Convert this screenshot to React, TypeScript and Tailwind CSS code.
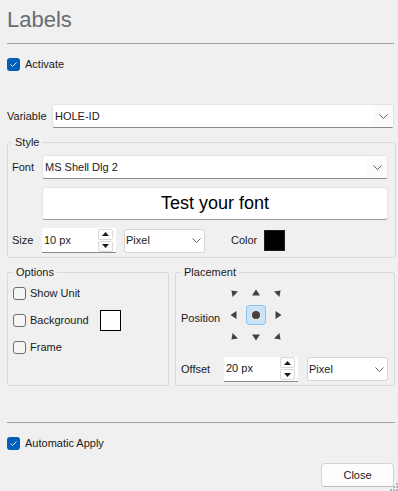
import React from "react";

function Chevron() {
  return (
    <svg width="9" height="5" viewBox="0 0 9 5" className="block">
      <path d="M0.5 0.5 L4.5 4.5 L8.5 0.5" fill="none" stroke="#606060" strokeWidth="1" />
    </svg>
  );
}

function CheckBox({ checked }: { checked: boolean }) {
  if (checked) {
    return (
      <span className="flex h-[13px] w-[13px] shrink-0 items-center justify-center rounded-[3px] bg-[#005fb8]">
        <svg width="13" height="13" viewBox="0 0 13 13" className="block">
          <path d="M3.5 6.5 L5.5 8.5 L9.5 4.5" fill="none" stroke="#e6eef8" strokeWidth="1" />
        </svg>
      </span>
    );
  }
  return <span className="h-[13px] w-[13px] shrink-0 rounded-[3px] border border-[#6e6e6e] bg-[#f5f5f5]" />;
}

function EditCombo({ value }: { value: string }) {
  return (
    <div className="flex h-[24px] min-w-0 flex-1 items-center rounded-[3px] border border-[#e3e3e3] border-b-[#8a8a8a] bg-white pl-[2px]">
      <span className="flex-1 truncate">{value}</span>
      <span className="flex h-full w-[20px] items-center justify-center bg-[#fbfbfb]">
        <Chevron />
      </span>
    </div>
  );
}

function Combo({ value }: { value: string }) {
  return (
    <div className="flex h-[24px] w-[81px] shrink-0 items-center rounded-[3px] border border-[#d5d5d5] bg-white pl-[1px] pr-[3px]">
      <span className="flex-1">{value}</span>
      <Chevron />
    </div>
  );
}

function SpinArrow({ up }: { up: boolean }) {
  return (
    <span className="flex h-[11px] w-[15px] items-center justify-center rounded-[2px] border border-[#d8d8d8] bg-[#fcfcfc]">
      <svg width="7" height="4" viewBox="0 0 7 4" className="block">
        {up ? <path d="M3.5 0 L7 4 L0 4 Z" fill="#1a1a1a" /> : <path d="M0 0 L7 0 L3.5 4 Z" fill="#1a1a1a" />}
      </svg>
    </span>
  );
}

function SpinBox({ value }: { value: string }) {
  return (
    <div className="flex h-[25px] w-[74px] shrink-0 items-center border-b border-[#8a8a8a] bg-white pl-[2px] pr-[3px]">
      <span className="flex-1">{value}</span>
      <span className="flex flex-col gap-px">
        <SpinArrow up />
        <SpinArrow up={false} />
      </span>
    </div>
  );
}

const ARROWS: Record<string, string> = {
  tl: "8.4,8.4 15,9.6 9.6,15",
  t: "11,7.5 15,13.5 7,13.5",
  tr: "13.6,8.4 7,9.6 12.4,15",
  l: "7.5,11 13.5,7 13.5,15",
  r: "14.5,11 8.5,7 8.5,15",
  bl: "8.4,13.6 15,12.4 9.6,7",
  b: "7,8.5 15,8.5 11,14.5",
  br: "13.6,13.6 7,12.4 12.4,7",
};

function ArrowCell({ dir }: { dir: string }) {
  return (
    <div className="flex h-[22px] w-[22px] items-center justify-center">
      <svg width="22" height="22" viewBox="0 0 22 22" className="block">
        <polygon points={ARROWS[dir]} fill="#4a4039" />
      </svg>
    </div>
  );
}

function Fieldset({ title, className, children }: { title: string; className?: string; children: React.ReactNode }) {
  return (
    <fieldset className={"min-w-0 rounded-[2px] border border-[#dadada] " + (className ?? "")}>
      <legend className="px-[3px] leading-[15px]">{title}</legend>
      {children}
    </fieldset>
  );
}

export default function App() {
  return (
    <div className="relative h-[491px] w-[398px] overflow-hidden bg-[#f0f0f0] font-['Liberation_Sans',Arial,sans-serif] text-[11px] text-[#1a1a1a]">
      <div className="h-[43px] pl-[7px] pt-[5px] text-[22px] leading-[30px] text-[#676c73]">Labels</div>
      <div className="ml-[7px] mr-[4px] h-px bg-[#a3a3a3]" />

      <div className="mt-[14px] flex h-[13px] items-center gap-[5px] pl-[7px]">
        <CheckBox checked />
        <span>Activate</span>
      </div>

      <div className="mt-[33px] flex items-center pl-[7px] pr-[4px]">
        <span className="w-[45px] shrink-0">Variable</span>
        <EditCombo value="HOLE-ID" />
      </div>

      <Fieldset title="Style" className="ml-[7px] mr-[2px] mt-[7px] pb-[4px] pl-[4px] pr-[7px]">
        <div className="mt-[5px] flex items-center">
          <span className="w-[30px] shrink-0">Font</span>
          <EditCombo value="MS Shell Dlg 2" />
        </div>
        <div className="ml-[30px] mt-[8px] flex h-[33px] items-center justify-center rounded-[3px] border border-[#e3e3e3] border-b-[#9a9a9a] bg-white text-[18px] text-black">
          Test your font
        </div>
        <div className="mt-[8px] flex h-[25px] items-center">
          <span className="w-[30px] shrink-0">Size</span>
          <SpinBox value="10 px" />
          <div className="ml-[8px]">
            <Combo value="Pixel" />
          </div>
          <span className="ml-[26px] w-[33px] shrink-0">Color</span>
          <span className="h-[21px] w-[21px] shrink-0 border border-[#202020] bg-black" />
        </div>
      </Fieldset>

      <div className="mt-[7px] flex gap-[6px] pl-[7px] pr-[3px]">
        <Fieldset title="Options" className="w-[162px] shrink-0 pl-[5px]">
          <div className="mt-[3px] flex flex-col gap-[6px]">
            <div className="flex h-[21px] items-center">
              <CheckBox checked={false} />
              <span className="ml-[4px]">Show Unit</span>
            </div>
            <div className="flex h-[21px] items-center">
              <CheckBox checked={false} />
              <span className="ml-[4px] w-[70px] shrink-0">Background</span>
              <span className="h-[21px] w-[21px] shrink-0 border border-black bg-white" />
            </div>
            <div className="flex h-[21px] items-center">
              <CheckBox checked={false} />
              <span className="ml-[4px]">Frame</span>
            </div>
          </div>
        </Fieldset>

        <Fieldset title="Placement" className="flex-1 pb-[4px] pl-[5px] pr-[5px]">
          <div className="mt-[2px] flex items-center">
            <span className="w-[42px] shrink-0 pt-[6px]">Position</span>
            <div className="grid grid-cols-[22px_22px_22px] grid-rows-[22px_22px_22px]">
              <ArrowCell dir="tl" />
              <ArrowCell dir="t" />
              <ArrowCell dir="tr" />
              <ArrowCell dir="l" />
              <div className="flex items-center justify-center">
                <div className="flex h-[20px] w-[20px] items-center justify-center rounded-[3px] border border-[#8ec4ee] bg-[#cce4f7]">
                  <span className="h-[8px] w-[8px] rounded-full bg-[#4a4039]" />
                </div>
              </div>
              <ArrowCell dir="r" />
              <ArrowCell dir="bl" />
              <ArrowCell dir="b" />
              <ArrowCell dir="br" />
            </div>
          </div>
          <div className="mt-[9px] flex h-[24px] items-center">
            <span className="w-[43px] shrink-0">Offset</span>
            <SpinBox value="20 px" />
            <div className="ml-[9px]">
              <Combo value="Pixel" />
            </div>
          </div>
        </Fieldset>
      </div>

      <div className="ml-[7px] mr-[3px] mt-[36px] h-px bg-[#a3a3a3]" />

      <div className="mt-[14px] flex h-[13px] items-center gap-[5px] pl-[7px]">
        <CheckBox checked />
        <span>Automatic Apply</span>
      </div>

      <div className="mt-[13px] flex justify-end pr-[4px]">
        <button className="h-[24px] w-[73px] rounded-[4px] border border-[#d3d3d3] border-b-[#bdbdbd] bg-[#fdfdfd] text-[11px] text-[#1a1a1a]">
          Close
        </button>
      </div>

      <svg width="10" height="10" viewBox="0 0 10 10" className="absolute bottom-0 right-0 block">
        <rect x="8" y="2" width="2" height="2" fill="#b4b4b4" />
        <rect x="5" y="5" width="2" height="2" fill="#b4b4b4" />
        <rect x="8" y="5" width="2" height="2" fill="#b4b4b4" />
        <rect x="2" y="8" width="2" height="2" fill="#b4b4b4" />
        <rect x="5" y="8" width="2" height="2" fill="#b4b4b4" />
        <rect x="8" y="8" width="2" height="2" fill="#b4b4b4" />
      </svg>
    </div>
  );
}
